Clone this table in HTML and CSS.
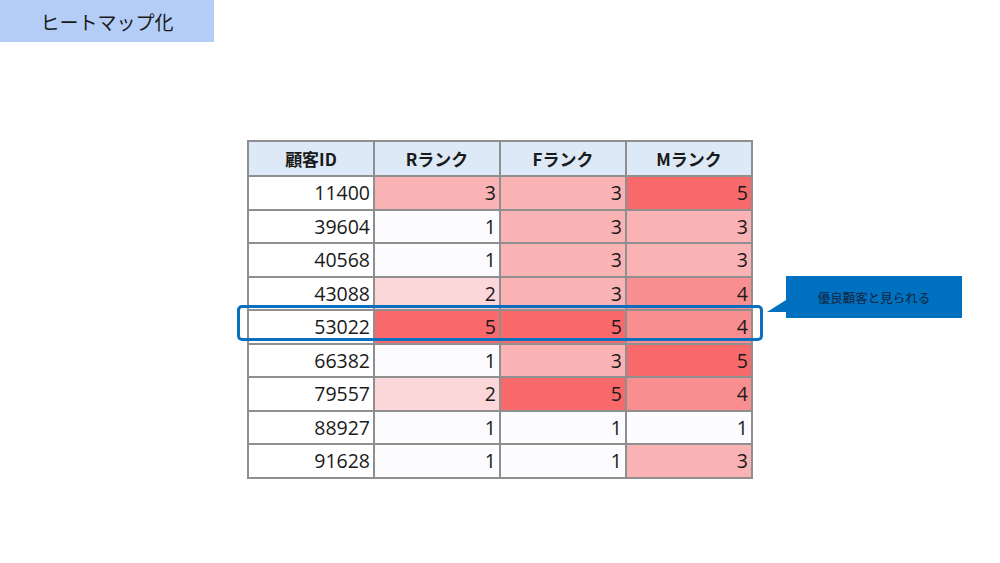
FILE: index.html
```html
<!DOCTYPE html>
<html lang="ja">
<head>
<meta charset="utf-8">
<link rel="stylesheet" href="styles.css">
</head>
<body>
<div class="slide">
  <div class="title">ヒートマップ化</div>
  <div class="stage">
    <div class="table-wrap">
      <table class="heat">
        <thead>
          <tr><th>顧客ID</th><th>Rランク</th><th>Fランク</th><th>Mランク</th></tr>
        </thead>
        <tbody>
          <tr><td>11400</td><td class="s3">3</td><td class="s3">3</td><td class="s5">5</td></tr>
          <tr><td>39604</td><td class="s1">1</td><td class="s3">3</td><td class="s3">3</td></tr>
          <tr><td>40568</td><td class="s1">1</td><td class="s3">3</td><td class="s3">3</td></tr>
          <tr><td>43088</td><td class="s2">2</td><td class="s3">3</td><td class="s4">4</td></tr>
          <tr><td>53022</td><td class="s5">5</td><td class="s5">5</td><td class="s4">4</td></tr>
          <tr><td>66382</td><td class="s1">1</td><td class="s3">3</td><td class="s5">5</td></tr>
          <tr><td>79557</td><td class="s2">2</td><td class="s5">5</td><td class="s4">4</td></tr>
          <tr><td>88927</td><td class="s1">1</td><td class="s1">1</td><td class="s1">1</td></tr>
          <tr><td>91628</td><td class="s1">1</td><td class="s1">1</td><td class="s3">3</td></tr>
        </tbody>
      </table>
      <div class="highlight"></div>
      <div class="callout">
        <svg class="tail" width="20" height="14" viewBox="0 0 20 14"><polygon points="19,0 0,12 19,12" fill="#0070c0"/></svg>
        <span>優良顧客と見られる</span>
      </div>
    </div>
  </div>
</div>
</body>
</html>
```

FILE: styles.css
```css
html, body {
  margin: 0;
  padding: 0;
  background: #ffffff;
}
body {
  font-family: "Noto Sans CJK JP", "Noto Sans", sans-serif;
  color: #111;
}
.slide {
  width: 1000px;
  height: 563px;
  overflow: hidden;
  position: relative;
}
.title {
  width: 214px;
  height: 42px;
  background: #b4cdf7;
  display: flex;
  align-items: center;
  justify-content: center;
  font-size: 19px;
  color: #1a1a1a;
}
.stage {
  padding-top: 98px;
  padding-left: 247px;
}
.table-wrap {
  position: relative;
  width: 506px;
}
.heat {
  border-collapse: collapse;
  table-layout: fixed;
  width: 506px;
}
.heat th, .heat td {
  border: 2px solid #8f8f8f;
  width: 126px;
  padding: 0 3px 0 0;
  box-sizing: border-box;
}
.heat th {
  height: 35px;
  background: #dde9f6;
  font-weight: bold;
  font-size: 17px;
  text-align: center;
  padding: 0;
  color: #1a1a1a;
}
.heat td {
  height: 33.5px;
  font-family: "Open Sans", "Noto Sans CJK JP", sans-serif;
  font-size: 19.5px;
  text-align: right;
  line-height: 1;
  background: #ffffff;
  color: #1a1a1a;
}
.heat td.s1 { background: #fcfcff; }
.heat td.s2 { background: #fbd7da; }
.heat td.s3 { background: #fab3b5; }
.heat td.s4 { background: #f98e90; }
.heat td.s5 { background: #f8696b; }

.highlight {
  position: absolute;
  left: -10px;
  top: 165px;
  width: 526px;
  height: 36px;
  border: 3px solid #0a6fbe;
  border-radius: 5px;
  box-sizing: border-box;
}
.callout {
  position: absolute;
  left: 539px;
  top: 136px;
  width: 176px;
  height: 42px;
  background: #0070c0;
  display: flex;
  align-items: center;
  justify-content: center;
  font-size: 12.5px;
  color: #14233a;
}
.callout .tail {
  position: absolute;
  left: -19px;
  top: 24px;
}
```
